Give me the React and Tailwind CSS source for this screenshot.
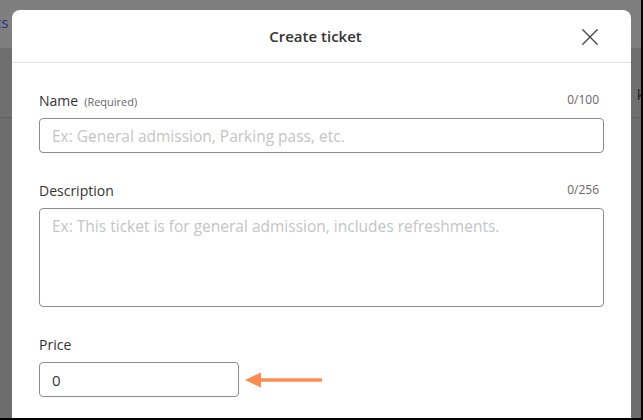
function Field({ label, hint, count, children }) {
    return (
        <div className="flex flex-col gap-2">
            <div className="flex items-center justify-between h-5">
                <div className="flex items-baseline gap-1.5">
                    <span className="text-[14px] text-[#333]">{label}</span>
                    {hint && <span className="text-[11px] text-[#666]">{hint}</span>}
                </div>
                {count && <span className="text-[12px] text-[#666] pr-[5px]">{count}</span>}
            </div>
            {children}
        </div>
    )
}

export default function App() {
    return (
        <div className="relative w-[643px] h-[420px] overflow-hidden bg-[#6d6d6d] border-r-2 border-b-2 border-black font-['Open_Sans',sans-serif]">
            {/* page behind the dialog */}
            <div className="h-12 bg-[#7f7f7f] flex items-center">
                <span className="-ml-1.5 text-[15px] text-[#23348a] -mt-1">cs</span>
            </div>
            <div className="h-[70px] bg-[#6f6f6f] border-b border-[#5f5f5f] flex items-center justify-end">
                <span className="-mr-3 text-[15px] text-[#222] mt-6">ka</span>
            </div>

            {/* dialog */}
            <div className="absolute left-[12px] top-[10px] w-[619px] bottom-0 bg-white rounded-t-lg">
                <div className="relative h-[53px] flex items-center justify-center border-b border-[#e3e3e3]">
                    <span className="text-[15px] font-semibold text-[#333] -ml-3">Create ticket</span>
                    <svg className="absolute right-[33px] top-[19px]" width="16" height="16" viewBox="0 0 16 16" stroke="#444" strokeWidth="1.3" strokeLinecap="round">
                        <line x1="0.8" y1="0.8" x2="15.2" y2="15.2" />
                        <line x1="15.2" y1="0.8" x2="0.8" y2="15.2" />
                    </svg>
                </div>

                <div className="px-[27px] pt-[27px] flex flex-col gap-[27px]">
                    <Field label="Name" hint="(Required)" count="0/100">
                        <input
                            className="h-[35px] w-full rounded border border-[#8c8c8c] px-3 text-[15.5px] text-[#333] placeholder:text-[#c4c4c4] outline-none"
                            placeholder="Ex: General admission, Parking pass, etc."
                        />
                    </Field>

                    <Field label="Description" count="0/256">
                        <textarea
                            className="h-[99px] w-full rounded border border-[#8c8c8c] px-3 py-[6px] text-[15.5px] text-[#333] placeholder:text-[#c4c4c4] outline-none resize-none block"
                            placeholder="Ex: This ticket is for general admission, includes refreshments."
                        />
                    </Field>

                    <Field label="Price">
                        <div className="flex items-center gap-[6px]">
                            <input
                                className="h-[35px] w-[200px] rounded border border-[#8c8c8c] px-3 text-[15px] text-[#333] outline-none"
                                defaultValue="0"
                            />
                            <svg width="78" height="16" viewBox="0 0 78 16">
                                <polygon points="0,8 16,0.5 16,15.5" fill="#fd8a50" />
                                <rect x="15" y="6.3" width="62" height="3.4" fill="#fd8a50" />
                            </svg>
                        </div>
                    </Field>
                </div>
            </div>
        </div>
    )
}
